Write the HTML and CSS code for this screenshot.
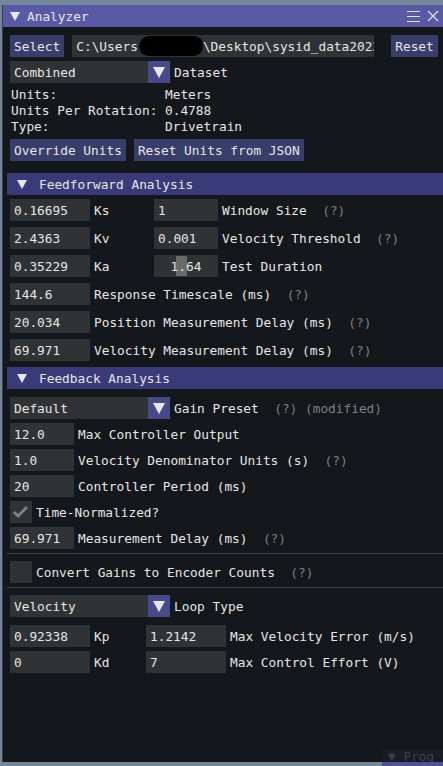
FILE: index.html
```html
<!DOCTYPE html>
<html lang="en">
<head>
    <meta charset="UTF-8">
    <meta name="viewport" content="width=device-width, initial-scale=1.0">
    <title>Analyzer</title>
    <link rel="stylesheet" href="styles.css">
</head>
<body>
    <div class="window">
        <div class="titlebar">
            <svg class="tri" width="10" height="9" viewBox="0 0 10 9"><polygon points="0,0 10,0 5,9" fill="#e8e8e8"/></svg>
            <span class="title">Analyzer</span>
            <div class="title-icons">
                <svg width="13" height="12" viewBox="0 0 13 12"><path d="M0 1.5H13M0 6.5H13M0 11.5H13" stroke="#e0e0e0" stroke-width="1"/></svg>
                <svg width="12" height="12" viewBox="0 0 12 12"><path d="M1 1L11 11M11 1L1 11" stroke="#e0e0e0" stroke-width="1.3"/></svg>
            </div>
        </div>

        <div class="content">
            <div class="row mt8">
                <button class="btn">Select</button>
                <div class="field path">C:\Users<span class="redact"></span>\Desktop\sysid_data2023</div>
                <button class="btn reset">Reset</button>
            </div>

            <div class="row mt4">
                <div class="combo"><span class="combo-value">Combined</span><span class="combo-arrow"><svg width="12" height="11" viewBox="0 0 12 11"><polygon points="0,0 12,0 6,11" fill="#e8e8e8"/></svg></span></div>
                <span class="label">Dataset</span>
            </div>

            <div class="info mt4">
                <span>Units:</span><span>Meters</span>
                <span>Units Per Rotation:</span><span>0.4788</span>
                <span>Type:</span><span>Drivetrain</span>
            </div>

            <div class="row mt4 btn-row">
                <button class="btn">Override Units</button>
                <button class="btn">Reset Units from JSON</button>
            </div>

            <div class="header mt12">
                <svg class="tri" width="10" height="9" viewBox="0 0 10 9"><polygon points="0,0 10,0 5,9" fill="#e8e8e8"/></svg>
                <span>Feedforward Analysis</span>
            </div>

            <div class="row mt4">
                <div class="field w80">0.16695</div><span class="label w-ff">Ks</span>
                <div class="field w64">1</div><span class="label">Window Size  <span class="help">(?)</span></span>
            </div>
            <div class="row mt6">
                <div class="field w80">2.4363</div><span class="label w-ff">Kv</span>
                <div class="field w64">0.001</div><span class="label">Velocity Threshold  <span class="help">(?)</span></span>
            </div>
            <div class="row mt6">
                <div class="field w80">0.35229</div><span class="label w-ff">Ka</span>
                <div class="field w64 slider"><span class="grab"></span><span class="slider-text">1.64</span></div><span class="label">Test Duration</span>
            </div>
            <div class="row mt6">
                <div class="field w80">144.6</div><span class="label">Response Timescale (ms)  <span class="help">(?)</span></span>
            </div>
            <div class="row mt6">
                <div class="field w80">20.034</div><span class="label">Position Measurement Delay (ms)  <span class="help">(?)</span></span>
            </div>
            <div class="row mt6">
                <div class="field w80">69.971</div><span class="label">Velocity Measurement Delay (ms)  <span class="help">(?)</span></span>
            </div>

            <div class="header mt6">
                <svg class="tri" width="10" height="9" viewBox="0 0 10 9"><polygon points="0,0 10,0 5,9" fill="#e8e8e8"/></svg>
                <span>Feedback Analysis</span>
            </div>

            <div class="row mt8">
                <div class="combo"><span class="combo-value">Default</span><span class="combo-arrow"><svg width="12" height="11" viewBox="0 0 12 11"><polygon points="0,0 12,0 6,11" fill="#e8e8e8"/></svg></span></div>
                <span class="label">Gain Preset  <span class="help">(?) (modified)</span></span>
            </div>
            <div class="row mt4">
                <div class="field w64">12.0</div><span class="label">Max Controller Output</span>
            </div>
            <div class="row mt4">
                <div class="field w64">1.0</div><span class="label">Velocity Denominator Units (s)  <span class="help">(?)</span></span>
            </div>
            <div class="row mt4">
                <div class="field w64">20</div><span class="label">Controller Period (ms)</span>
            </div>
            <div class="row mt4">
                <div class="checkbox"><svg width="22" height="22" viewBox="0 0 22 22"><polyline points="4,11 8,15 17,6" fill="none" stroke="#808080" stroke-width="3"/></svg></div>
                <span class="label">Time-Normalized?</span>
            </div>
            <div class="row mt4">
                <div class="field w64">69.971</div><span class="label">Measurement Delay (ms)  <span class="help">(?)</span></span>
            </div>

            <div class="separator mt4"></div>

            <div class="row mt7">
                <div class="checkbox"></div>
                <span class="label">Convert Gains to Encoder Counts  <span class="help">(?)</span></span>
            </div>

            <div class="separator mt4"></div>

            <div class="row mt7">
                <div class="combo"><span class="combo-value">Velocity</span><span class="combo-arrow"><svg width="12" height="11" viewBox="0 0 12 11"><polygon points="0,0 12,0 6,11" fill="#e8e8e8"/></svg></span></div>
                <span class="label">Loop Type</span>
            </div>
            <div class="row mt8">
                <div class="field w80">0.92338</div><span class="label w-fb">Kp</span>
                <div class="field w80">1.2142</div><span class="label">Max Velocity Error (m/s)</span>
            </div>
            <div class="row mt4">
                <div class="field w80">0</div><span class="label w-fb">Kd</span>
                <div class="field w80">7</div><span class="label">Max Control Effort (V)</span>
            </div>
        </div>
    </div>

    <div class="other-window">
        <span>&#9660; Prog</span>
    </div>
</body>
</html>
```

FILE: styles.css
```css
body {
    margin: 0;
    padding: 0;
    background: #72879a;
    font-family: "DejaVu Sans Mono", "Liberation Mono", monospace;
    font-size: 12.8px;
    color: #e6e6e6;
    overflow: hidden;
}

.window {
    margin: 5px 0 0 2px;
    height: 757px;
    background: #14171b;
    border-left: 1px solid #3a4049;
    overflow: hidden;
}

.titlebar {
    display: flex;
    align-items: center;
    height: 22px;
    background: #5959a6;
    padding-left: 7px;
}

.titlebar .title {
    margin-left: 7px;
}

.title-icons {
    margin-left: auto;
    display: flex;
    align-items: center;
    gap: 7px;
    padding-right: 4px;
}

.content {
    display: flex;
    flex-direction: column;
    padding-left: 7px;
}

.row {
    display: flex;
    align-items: center;
    height: 22px;
    white-space: pre;
}

.mt4 { margin-top: 4px; }
.mt6 { margin-top: 6px; }
.mt7 { margin-top: 7px; }
.mt8 { margin-top: 8px; }
.mt12 { margin-top: 12px; }

.btn {
    height: 22px;
    background: #393d69;
    color: #e6e6e6;
    border: none;
    padding: 0 4px;
    font: inherit;
    cursor: pointer;
}

.reset {
    margin-left: 17px;
}

.btn-row {
    gap: 8px;
}

.field {
    position: relative;
    height: 22px;
    box-sizing: border-box;
    background: #303335;
    padding: 0 4px;
    display: flex;
    align-items: center;
    overflow: hidden;
}

.path {
    width: 302px;
    margin-left: 8px;
    padding-left: 4px;
}

.redact {
    display: inline-block;
    flex: none;
    width: 64px;
    height: 20px;
    margin-left: 1px;
    background: #000;
    border-radius: 11px 9px 10px 10px;
}

.w80 { width: 80px; }
.w64 { width: 64px; }

.label {
    margin-left: 4px;
}

.w-ff {
    width: 60px;
}

.w-fb {
    width: 52px;
}

.help {
    color: #808080;
}

.slider {
    justify-content: center;
}

.grab {
    position: absolute;
    left: 22px;
    top: 1px;
    bottom: 1px;
    width: 11px;
    background: #6a6a6a;
}

.slider-text {
    position: relative;
}

.combo {
    display: flex;
    width: 160px;
    height: 22px;
    background: #303335;
}

.combo-value {
    flex: 1;
    display: flex;
    align-items: center;
    padding-left: 4px;
}

.combo-arrow {
    width: 22px;
    display: flex;
    align-items: center;
    justify-content: center;
    background: #474b8a;
}

.info {
    display: grid;
    grid-template-columns: 154px auto;
    line-height: 16px;
    padding-left: 1px;
}

.header {
    display: flex;
    align-items: center;
    height: 22px;
    margin-left: -3px;
    padding-left: 10px;
    gap: 12px;
    background: #3a3a79;
}

.checkbox {
    width: 22px;
    height: 22px;
    background: #303335;
}

.separator {
    height: 1px;
    margin-left: -3px;
    background: #3f434a;
}

.other-window {
    position: absolute;
    left: 382px;
    top: 749px;
    width: 61px;
    height: 13px;
    background: #191c24;
    border-bottom: 4px solid #50509a;
    color: #3d4050;
    line-height: 15px;
    padding-left: 6px;
    box-sizing: content-box;
    overflow: hidden;
    white-space: nowrap;
}
```
